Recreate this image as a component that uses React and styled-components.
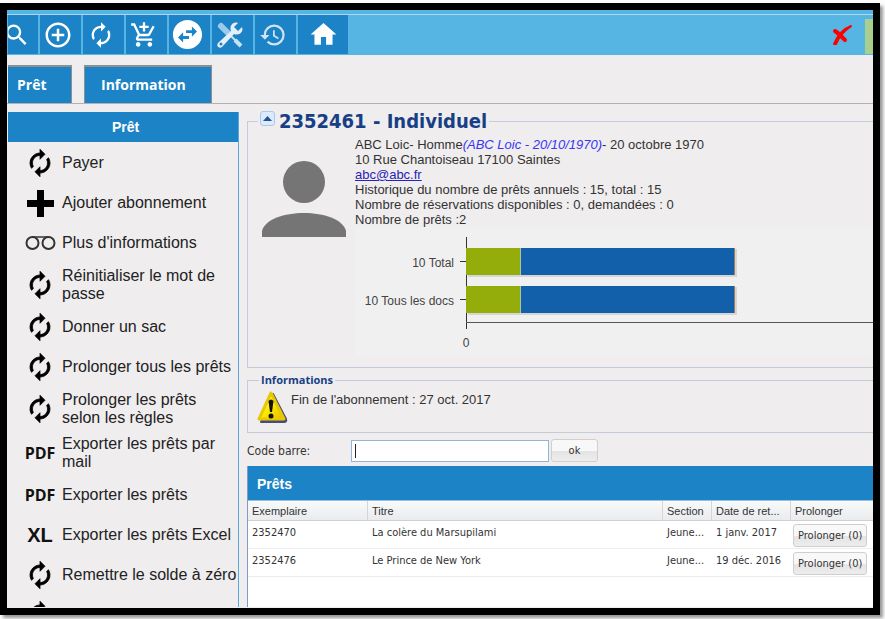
import React from "react";
import styled, { createGlobalStyle, css } from "styled-components";
import {
  MdAddCircleOutline,
  MdAddShoppingCart,
  MdAutorenew,
  MdHistory,
  MdHome,
  MdSwapHorizontalCircle,
} from "react-icons/md";

const blue = "#1c83c6";
const sky = "#57b5e4";
const panel = "#efedee";
const line = "#c5cbd8";
const arial = '"Liberation Sans", Arial, sans-serif';
const tahoma = '"DejaVu Sans Condensed", "DejaVu Sans", Tahoma, sans-serif';
const open = '"Open Sans", "Noto Sans", sans-serif';

const GlobalStyle = createGlobalStyle`
  * { box-sizing: border-box; }
  body { margin: 0; background: #fcfcfc; overflow: hidden; }
  button { cursor: pointer; }
`;

const Page = styled.div`
  display: flex;
  height: 100vh;
  padding: 3px 5px 4px 0;
  font-family: ${arial};
  color: #333;
`;

const Frame = styled.div`
  flex: 1;
  display: flex;
  flex-direction: column;
  min-width: 0;
  border: 7px solid #000;
  background: ${panel};
  box-shadow: 3px 3px 3px #999;
  overflow: hidden;
`;

const Toolbar = styled.nav`
  display: flex;
  flex: none;
  gap: 2px;
  height: 45px;
  padding: 5px 0 1px 1px;
  background: linear-gradient(${sky} 4px, #a9daf2 4px, #a9daf2 5px, ${sky} 5px);
`;

const Tool = styled.button`
  display: flex;
  align-items: center;
  justify-content: center;
  width: 41px;
  padding: 0 5px 0 0;
  border: 0;
  background: ${blue};
  color: #fff;
  ${(p) => p.$clipped && css`width: 30px; justify-content: flex-start;`}
  ${(p) => p.$wide && css`width: 50px; padding: 0;`}
`;

const CloseTool = styled.button`
  display: flex;
  align-items: center;
  margin-left: auto;
  margin-right: 10px;
  padding: 0;
  border: 0;
  background: none;
`;

const GreenEdge = styled.div`
  width: 8px;
  margin-top: 4px;
  background: #a8cf8e;
`;

const Tabs = styled.div`
  display: flex;
  flex: none;
  gap: 12px;
  height: 49px;
  padding: 10px 0 0 1px;
  border-bottom: 1px solid #b3b1b2;
`;

const Tab = styled.button`
  width: ${(p) => p.$width}px;
  padding: 0 16px 2px ${(p) => (p.$first ? 9 : 16)}px;
  border: solid #8f8f8f;
  border-width: 2px 1px 0 ${(p) => (p.$first ? 0 : 1)}px;
  background: ${blue};
  color: #fff;
  font: bold 14px ${open};
  text-align: left;
`;

const Body = styled.div`
  display: flex;
  flex: 1;
  min-height: 0;
  gap: 8px;
  padding: 0 0 1px 1px;
`;

const Sidebar = styled.aside`
  flex: none;
  width: 231px;
  margin-top: 8px;
  border-right: 1px solid #5aa8dc;
  overflow: hidden;
`;

const SidebarTitle = styled.h2`
  margin: 0 0 1px;
  padding-left: 5px;
  background: ${blue};
  color: #fff;
  font: bold 14px/30px ${arial};
  text-align: center;
`;

const Action = styled.button`
  display: flex;
  align-items: center;
  gap: 6px;
  width: 100%;
  height: ${(p) => (p.$tall ? 44 : 40)}px;
  padding: 0 0 0 16px;
  border: 0;
  background: none;
  color: #222;
  font: 16px/18px ${arial};
  text-align: left;
`;

const ActionIcon = styled.span`
  display: flex;
  flex: none;
  justify-content: center;
  width: 32px;
  color: #000;
`;

const ActionLabel = styled.span`
  white-space: pre-line;
`;

const Mark = styled.span`
  color: #111;
  ${(p) =>
    p.$large
      ? css`font: bold 20px/24px ${arial};`
      : css`font: bold 16px/20px ${open};`}
`;

const Main = styled.main`
  display: flex;
  flex: 1;
  flex-direction: column;
  min-width: 0;
  padding-top: 6px;
`;

const Group = styled.fieldset`
  flex: none;
  min-width: 0;
  margin: 0;
  padding: ${(p) => (p.$compact ? "2px 0 4px 8px" : "5px 0 11px 14px")};
  border: 1px solid ${line};
  border-right: 0;
  ${(p) => p.$compact && css`margin-top: 4px;`}
`;

const Legend = styled.legend`
  display: flex;
  align-items: center;
  gap: 4px;
  padding: 0 2px;
  color: #173f85;
  ${(p) =>
    p.$small
      ? css`margin-left: 3px; font: bold 11px/16px ${open};`
      : css`margin-left: -4px; font: bold 20px/22px ${tahoma};`}
`;

const Collapse = styled.button`
  display: flex;
  align-items: center;
  justify-content: center;
  width: 15px;
  height: 15px;
  margin-bottom: 6px;
  padding: 0;
  border: 1px solid #a9c8ea;
  border-radius: 3px;
  background: #dcebfb;
`;

const Person = styled.div`
  display: flex;
  gap: 9px;
`;

const Avatar = styled.svg`
  flex: none;
  margin-top: 23px;
`;

const Details = styled.div`
  flex: 1;
  min-width: 0;
  font-size: 13px;
  line-height: 15px;
`;

const Line = styled.div`
  white-space: nowrap;
`;

const Alias = styled.em`
  color: #3a35f5;
`;

const Mail = styled.a`
  color: #2a22b8;
`;

const Chart = styled.svg`
  display: block;
  width: 100%;
  height: 129px;
  background: #f0f0f0;
  font: 12px ${arial};
`;

const Notice = styled.div`
  display: flex;
  gap: 3px;
  height: 38px;
  font-size: 13px;
  line-height: 16px;
`;

const NoticeText = styled.span`
  padding-top: 2px;
`;

const Form = styled.form`
  display: grid;
  flex: none;
  grid-template-columns: 102px 198px 47px;
  column-gap: 2px;
  align-items: center;
  margin: 6px 0 4px;
  font: 12px ${tahoma};
`;

const Field = styled.input`
  height: 22px;
  padding: 0 3px;
  border: 1px solid #8fb5de;
  background: linear-gradient(#222, #222) 3px 3px / 1px 14px no-repeat #fff;
  font: 12px ${arial};
  caret-color: transparent;
  outline: 0;
`;

const SmallButton = styled.button`
  height: 23px;
  padding: 0 4px;
  border: 1px solid #cfcfcf;
  border-radius: 3px;
  background: linear-gradient(#f8f8f8 50%, #e4e4e4 55%, #ededed);
  color: #333;
  font: 11px ${tahoma};
  white-space: nowrap;
`;

const Loans = styled.section`
  flex: 1;
  min-height: 0;
  border-left: 1px solid #7f9cc8;
  background: #fff;
`;

const LoansTitle = styled.h2`
  margin: 0;
  padding: 2px 0 0 9px;
  border-bottom: 1px solid #8cc3e6;
  background: ${blue};
  color: #fff;
  font: bold 14px/32px ${arial};
`;

const Table = styled.table`
  width: 100%;
  border-collapse: separate;
  border-spacing: 0;
  table-layout: fixed;
  font: 11px/14px ${tahoma};
`;

const Col = styled.col`
  width: ${(p) => (p.$width ? p.$width + "px" : "auto")};
`;

const Head = styled.th`
  height: 20px;
  padding: 0 4px;
  border-right: 1px solid #d5d5d5;
  border-bottom: 1px solid #d0d0d0;
  background: linear-gradient(#fafafa, #e9ebee);
  font: 11px/14px ${arial};
  text-align: left;
  white-space: nowrap;
  overflow: hidden;
  text-overflow: ellipsis;
  &:last-child { border-right: 0; }
`;

const Cell = styled.td`
  height: 28px;
  padding: ${(p) => (p.$action ? "3px 0 0 2px" : "5px 0 0 4px")};
  border-bottom: 1px solid #ededed;
  vertical-align: top;
  white-space: nowrap;
`;

const Tools = () => (
  <svg width="28" height="28" viewBox="0 0 28 28" aria-hidden="true">
    <path d="M5 5 12 12" stroke="#9ccaea" strokeWidth="6" strokeLinecap="round" />
    <path d="M14 14 20 20" stroke="#c9e0f2" strokeWidth="2" />
    <path d="M19 19 25 25" stroke="#c9e0f2" strokeWidth="4" />
    <path
      d="M22 2c-5-2-9 3-7 8L2 22c-2 3 1 6 4 4L18 13c5 2 10-2 8-7l-4 4-4-4z"
      fill="#e3eff9"
    />
    <circle cx="5" cy="23" r="1.5" fill={blue} />
  </svg>
);

const Search = () => (
  <svg width="23" height="28" viewBox="5 0 19 24" aria-hidden="true">
    <path
      fill="#fff"
      d="M15.5 14h-.79l-.28-.27A6.47 6.47 0 0 0 16 9.5 6.5 6.5 0 1 0 9.5 16c1.61 0 3.09-.59 4.23-1.57l.27.28v.79l5 4.99L20.49 19l-4.99-5zm-6 0a4.5 4.5 0 1 1 0-9 4.5 4.5 0 0 1 0 9z"
    />
  </svg>
);

const RedCross = () => (
  <svg width="22" height="24" viewBox="0 0 22 24" aria-hidden="true">
    <path d="M3 21C6 14 12 6 20 3l-1 1C13 8 8 14 5 21z" fill="#f00" stroke="#f00" strokeWidth="2" strokeLinejoin="round" />
    <path d="M4 8c3 2 7 6 10 9" fill="none" stroke="#f00" strokeWidth="4" strokeLinecap="round" />
  </svg>
);

const Plus = () => (
  <svg width="27" height="27" viewBox="0 0 27 27" aria-hidden="true">
    <path d="M10 0h7v10h10v7H17v10h-7V17H0v-7h10z" fill="#000" />
  </svg>
);

const Glasses = () => (
  <svg width="31" height="16" viewBox="0 0 31 16" aria-hidden="true">
    <g fill="none" stroke="#333" strokeWidth="2">
      <circle cx="7.5" cy="8" r="6" />
      <circle cx="23.5" cy="8" r="6" />
      <path d="M7 2h17" strokeWidth="1.5" />
    </g>
  </svg>
);

const Warning = () => (
  <svg width="32" height="33" viewBox="0 0 32 33" aria-hidden="true">
    <defs>
      <linearGradient id="sun" x1="0" x2="1" y2="1">
        <stop offset="0" stopColor="#ffffa0" />
        <stop offset=".5" stopColor="#ffeb00" />
        <stop offset="1" stopColor="#e6b800" />
      </linearGradient>
    </defs>
    <path d="M17 4 30 29q1 3-2 3H5z" fill="#4a4c78" stroke="#4a4c78" strokeWidth="2" strokeLinejoin="round" />
    <path d="M15 3 28 29H3z" fill="url(#sun)" stroke="#e8c800" strokeWidth="3" strokeLinejoin="round" />
    <path d="M12.5 11q2.5-3 5 0l-1.5 11h-2z" fill="#111" />
    <circle cx="15" cy="26" r="2.5" fill="#111" />
  </svg>
);

const Cycle = () => (
  <svg width="30" height="30" viewBox="0 0 24 24" aria-hidden="true">
    <path
      fill="#000"
      stroke="#000"
      strokeWidth=".6"
      d="M12 6v3l4-4-4-4v3c-4.42 0-8 3.58-8 8 0 1.57.46 3.03 1.24 4.26L6.7 14.8c-.45-.83-.7-1.79-.7-2.8 0-3.31 2.69-6 6-6zm6.76 1.74L17.3 9.2c.44.84.7 1.79.7 2.8 0 3.31-2.69 6-6 6v-3l-4 4 4 4v-3c4.42 0 8-3.58 8-8 0-1.57-.46-3.03-1.24-4.26z"
    />
  </svg>
);

const actions = [
  [Cycle, "Payer"],
  [Plus, "Ajouter abonnement"],
  [Glasses, "Plus d'informations"],
  [Cycle, "Réinitialiser le mot de\npasse"],
  [Cycle, "Donner un sac"],
  [Cycle, "Prolonger tous les prêts"],
  [Cycle, "Prolonger les prêts\nselon les règles"],
  ["PDF", "Exporter les prêts par\nmail"],
  ["PDF", "Exporter les prêts"],
  ["XL", "Exporter les prêts Excel"],
  [Cycle, "Remettre le solde à zéro"],
  [Cycle, ""],
];

const bars = [
  { label: "10 Total", y: 21 },
  { label: "10 Tous les docs", y: 59 },
];

const loans = [
  ["2352470", "La colère du Marsupilami", "Jeune...", "1 janv. 2017"],
  ["2352476", "Le Prince de New York", "Jeune...", "19 déc. 2016"],
];

export default function App() {
  return (
    <Page>
      <GlobalStyle />
      <Frame>
        <Toolbar>
          <Tool $clipped><Search /></Tool>
          <Tool><MdAddCircleOutline size={30} /></Tool>
          <Tool><MdAutorenew size={28} /></Tool>
          <Tool><MdAddShoppingCart size={28} /></Tool>
          <Tool><MdSwapHorizontalCircle size={35} /></Tool>
          <Tool><Tools /></Tool>
          <Tool><MdHistory size={28} color="#cfe4f4" /></Tool>
          <Tool $wide><MdHome size={31} /></Tool>
          <CloseTool><RedCross /></CloseTool>
          <GreenEdge />
        </Toolbar>
        <Tabs>
          <Tab $width={64} $first>Prêt</Tab>
          <Tab $width={128}>Information</Tab>
        </Tabs>
        <Body>
          <Sidebar>
            <SidebarTitle>Prêt</SidebarTitle>
            {actions.map(([Icon, label], i) => (
              <Action key={i} $tall={label.includes("\n")}>
                <ActionIcon>
                  {typeof Icon === "string" ? <Mark $large={Icon === "XL"}>{Icon}</Mark> : <Icon />}
                </ActionIcon>
                <ActionLabel>{label}</ActionLabel>
              </Action>
            ))}
          </Sidebar>
          <Main>
            <Group>
              <Legend>
                <Collapse type="button">
                  <svg width="9" height="5" viewBox="0 0 9 5" aria-hidden="true">
                    <path d="M0 5 4.5 0 9 5z" fill="#24509a" />
                  </svg>
                </Collapse>
                2352461 - Individuel
              </Legend>
              <Person>
                <Avatar width="84" height="77" viewBox="0 0 84 77" aria-hidden="true">
                  <circle cx="42" cy="22" r="21" fill="#757575" />
                  <path d="M0 77v-6c6-24 78-24 84 0v6z" fill="#757575" />
                </Avatar>
                <Details>
                  <Line>ABC Loic- Homme<Alias>(ABC Loic - 20/10/1970)</Alias>- 20 octobre 1970</Line>
                  <Line>10 Rue Chantoiseau 17100 Saintes</Line>
                  <Line><Mail href="mailto:abc@abc.fr">abc@abc.fr</Mail></Line>
                  <Line>Historique du nombre de prêts annuels : 15, total : 15</Line>
                  <Line>Nombre de réservations disponibles : 0, demandées : 0</Line>
                  <Line>Nombre de prêts :2</Line>
                  <Chart>
                    <path d="M111.5 10v92" stroke="#333" />
                    {bars.map(({ label, y }) => (
                      <g key={label}>
                        <rect x="113" y={y + 1} width="269" height="28" fill="#d5d5d5" />
                        <rect x="111" y={y} width="54" height="27" fill="#94ad0a" />
                        <rect x="165" y={y} width="214" height="27" fill="#1160a9" />
                        <path d={`M165.5 ${y}v27`} stroke="#a9c3b0" />
                        <path d={`M379.5 ${y}v27`} stroke="#a07a5c" />
                        <path d={`M105 ${y + 13.5}h6`} stroke="#333" />
                        <text x="99" y={y + 19} textAnchor="end" fill="#444">{label}</text>
                      </g>
                    ))}
                    <line x1="111" x2="100%" y1="95.5" y2="95.5" stroke="#555" />
                    <text x="111" y="120" textAnchor="middle" fill="#444">0</text>
                  </Chart>
                </Details>
              </Person>
            </Group>
            <Group $compact>
              <Legend $small>Informations</Legend>
              <Notice>
                <Warning />
                <NoticeText>Fin de l'abonnement : 27 oct. 2017</NoticeText>
              </Notice>
            </Group>
            <Form onSubmit={(e) => e.preventDefault()}>
              <label htmlFor="barcode">Code barre:</label>
              <Field id="barcode" />
              <SmallButton>ok</SmallButton>
            </Form>
            <Loans>
              <LoansTitle>Prêts</LoansTitle>
              <Table>
                <colgroup>
                  <Col $width={120} />
                  <Col />
                  <Col $width={49} />
                  <Col $width={79} />
                  <Col $width={82} />
                </colgroup>
                <thead>
                  <tr>
                    <Head>Exemplaire</Head>
                    <Head>Titre</Head>
                    <Head>Section</Head>
                    <Head>Date de ret...</Head>
                    <Head>Prolonger</Head>
                  </tr>
                </thead>
                <tbody>
                  {loans.map((loan) => (
                    <tr key={loan[0]}>
                      {loan.map((value) => <Cell key={value}>{value}</Cell>)}
                      <Cell $action><SmallButton>Prolonger (0)</SmallButton></Cell>
                    </tr>
                  ))}
                </tbody>
              </Table>
            </Loans>
          </Main>
        </Body>
      </Frame>
    </Page>
  );
}
